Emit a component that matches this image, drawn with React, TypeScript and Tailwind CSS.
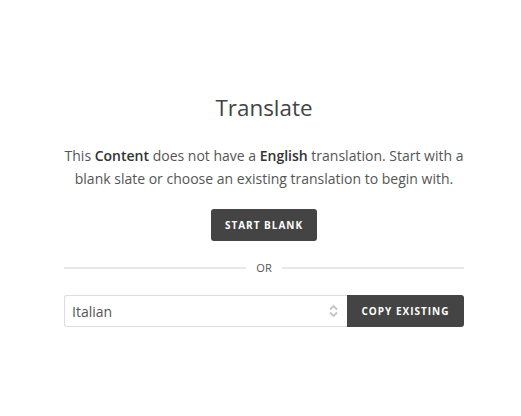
export default function App() {
  return (
    <div className="min-h-[416px] w-[521px] bg-white text-[#444]" style={{ fontFamily: '"Open Sans", sans-serif' }}>
      <div className="ml-[64px] w-[400px] pt-[92px] flex flex-col items-center">
        <h1 className="text-[22.4px] leading-[32px] text-[#444] font-normal">Translate</h1>
        <p className="mt-[20px] text-[14px] leading-[23px] text-center text-[#555]">
          This <b className="font-semibold text-[#333]">Content</b> does not have a <b className="font-semibold text-[#333]">English</b> translation. Start with a blank slate or choose an existing translation to begin with.
        </p>
        <button className="mt-[19px] h-[32px] w-[106px] rounded-[3px] bg-[#444] text-white text-[10px] font-bold tracking-[1px] uppercase">
          Start Blank
        </button>
        <div className="mt-[19px] w-full flex items-center gap-[10px]">
          <div className="flex-1 h-[2px] bg-[#e8e8e8]" />
          <span className="text-[11px] leading-[16px] text-[#555]">OR</span>
          <div className="flex-1 h-[2px] bg-[#e8e8e8]" />
        </div>
        <div className="mt-[19px] w-full flex h-[32px]">
          <div className="flex-1 flex items-center justify-between border border-[#ddd] border-r-0 rounded-l-[3px] pl-[7px] pr-[9px]">
            <span className="text-[14px] text-[#555]">Italian</span>
            <svg width="9" height="14" viewBox="0 0 9 14" fill="none" stroke="#c4c4c4" strokeWidth="1.8">
              <path d="M1 5.5 L4.5 2 L8 5.5" />
              <path d="M1 8.5 L4.5 12 L8 8.5" />
            </svg>
          </div>
          <button className="w-[117px] h-[32px] rounded-r-[3px] bg-[#444] text-white text-[10px] font-bold tracking-[1px] uppercase">
            Copy Existing
          </button>
        </div>
      </div>
    </div>
  );
}
